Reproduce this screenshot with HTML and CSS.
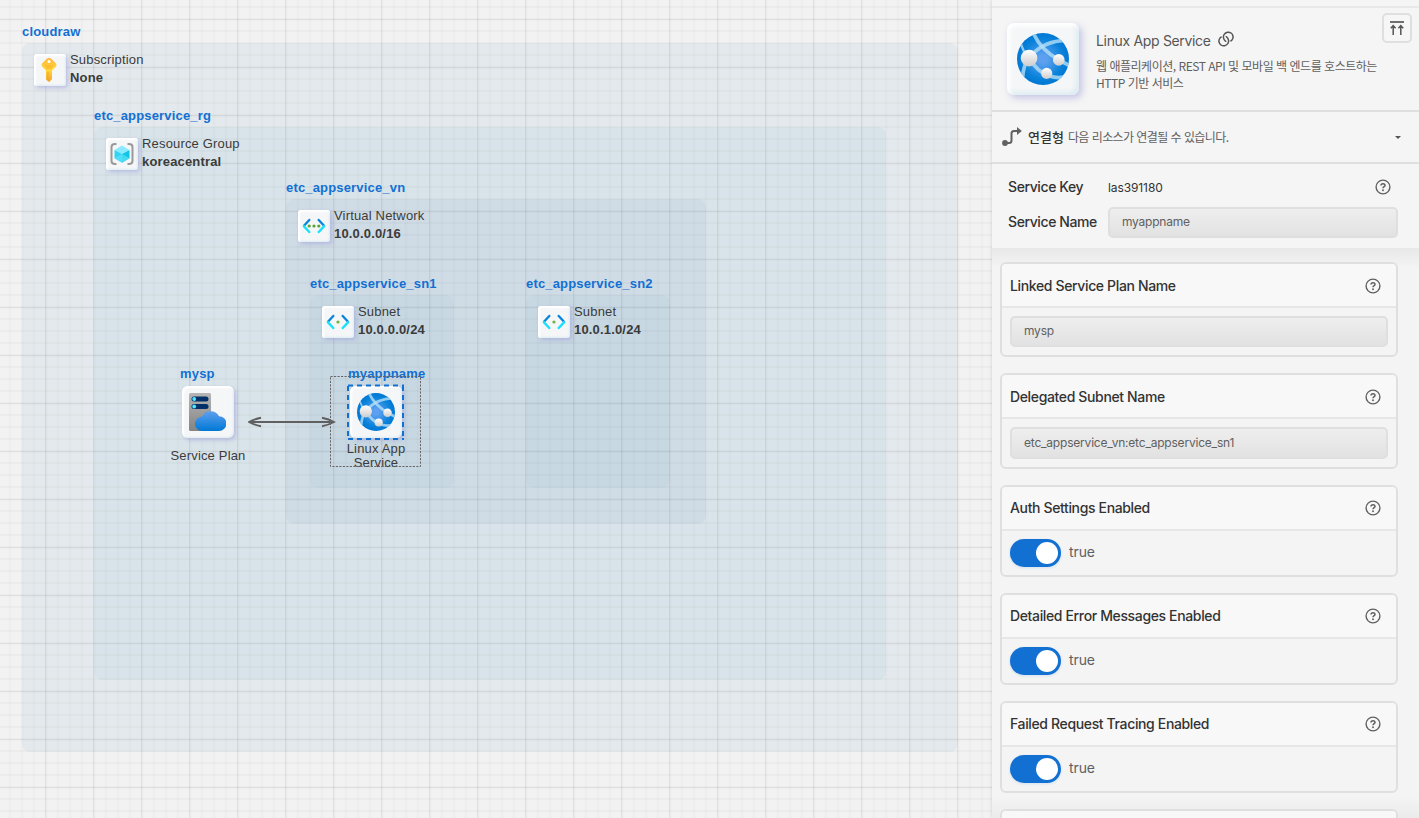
FILE: index.html
```
<!DOCTYPE html>
<html lang="ko">
<head>
<meta charset="utf-8">
<title>cloudraw</title>
<link rel="stylesheet" href="styles.css">
</head>
<body>
<svg class="defs" width="0" height="0">
  <defs>
    <linearGradient id="gCloud" x1="0" y1="0" x2="0" y2="1"><stop offset="0" stop-color="#5ea0ef"/><stop offset="1" stop-color="#0078d4"/></linearGradient>
    <radialGradient id="gGlobe" cx=".5" cy=".5" r=".5"><stop offset=".15" stop-color="#5ea0ef"/><stop offset=".75" stop-color="#0b83db"/><stop offset="1" stop-color="#0078d4"/></radialGradient>
    <linearGradient id="gBall" x1="0" y1="0" x2="0" y2="1"><stop offset="0" stop-color="#fff"/><stop offset="1" stop-color="#ccc"/></linearGradient>
    <linearGradient id="gServer" x1="0" y1="0" x2="0" y2="1"><stop offset="0" stop-color="#b5b5b5"/><stop offset="1" stop-color="#848484"/></linearGradient>
    <linearGradient id="gKey" x1="0" y1="0" x2="0" y2="1"><stop offset="0" stop-color="#ffb63a"/><stop offset=".5" stop-color="#ffd83a"/><stop offset="1" stop-color="#f0a32b"/></linearGradient>
    <symbol id="globe" viewBox="0 0 56 56">
      <clipPath id="globeClip"><circle cx="28" cy="28" r="28"/></clipPath>
      <circle cx="28" cy="28" r="28" fill="url(#gGlobe)"/>
      <g clip-path="url(#globeClip)" fill="none" stroke="#b4dff8" stroke-opacity=".8" stroke-width="4">
        <path d="M13 27Q28 8 54 8"/><path d="M18 1Q26 18 45 29L58 36"/><path d="M13 27Q22 42 34 46T54 46"/><path d="M13 27Q7 34 6 48"/><path d="M4 10Q6 20 13 27" stroke-width="2.500"/>
      </g>
      <g fill="url(#gBall)"><circle cx="13" cy="27" r="9"/><circle cx="45" cy="29" r="6.300"/><circle cx="32" cy="43.500" r="6"/></g>
    </symbol>
    <symbol id="help" viewBox="0 0 16 16">
      <circle cx="8" cy="8" r="6.900" fill="none" stroke="#606060" stroke-width="1.400"/>
      <path d="M6 6.600Q6 4.700 8 4.700T10 6.500C10 7.700 8 7.700 8 9.200" fill="none" stroke="#606060" stroke-width="1.500"/>
      <circle cx="8" cy="11.200" r=".95" fill="#606060"/>
    </symbol>
    <symbol id="angles" viewBox="0 0 24 16">
      <g fill="none" stroke-width="2.300"><path d="M8 1.200L1.700 8M16 1.200L22.300 8" stroke="#0a84d8"/><path d="M1.300 7.600L8 14.800M22.700 7.600L16 14.800" stroke="#19e0fb"/></g>
    </symbol>
  </defs>
</svg>
<div class="app">
  <main class="canvas">
    <div class="area area-sub"></div>
    <div class="area area-rg"></div>
    <div class="area area-vn"></div>
    <div class="area area-sn1"></div>
    <div class="area area-sn2"></div>

    <section class="group at-sub">
      <b class="name">cloudraw</b>
      <div class="head"><span class="tile small"><svg class="key-icon" width="16" height="24" viewBox="0 0 16 24"><path d="M8 0Q9.500 0 10.500 1L15 5.500Q16 7 15 8.500L11 12.500V21L8.500 23.800H7.500L5 21.500V12.500L1 8.500Q0 7 1 5.500L5.500 1Q6.500 0 8 0Z" fill="url(#gKey)"/><circle cx="8" cy="3.600" r="1.500" fill="#fff"/><path d="M4 8H12M5 10H11" stroke="#f7ab2c" stroke-width="1"/><path d="M7 14V22" stroke="#f5a32c" stroke-width="1"/></svg></span><p>Subscription<b>None</b></p></div>
    </section>
    <section class="group at-rg">
      <b class="name">etc_appservice_rg</b>
      <div class="head"><span class="tile small"><svg width="24" height="22" viewBox="0 0 24 22"><path d="M6.500 1H5Q1.500 1 1.500 4V18Q1.500 21 5 21H6.500M17.500 1H19Q22.500 1 22.500 4V18Q22.500 21 19 21H17.500" fill="none" stroke="#999" stroke-width="2"/><path d="M12 2.500L19.500 7L12 11L4.500 7Z" fill="#8aeaff"/><path d="M4.500 7L12 11V19.700L4.500 15.200Z" fill="#32d4f5"/><path d="M19.500 7L12 11V19.700L19.500 15.200Z" fill="#10c6e5"/><path d="M4.500 15.200L12 11L19.500 15.200L12 19.700Z" fill="#62e5f8" opacity=".65"/></svg></span><p>Resource Group<b>koreacentral</b></p></div>
    </section>
    <section class="group at-vn">
      <b class="name">etc_appservice_vn</b>
      <div class="head"><span class="tile small"><svg width="24" height="16"><use href="#angles"/><g fill="#59a533"><circle cx="7.200" cy="8" r="1.600"/><circle cx="12" cy="8" r="1.600"/><circle cx="16.800" cy="8" r="1.600"/></g></svg></span><p>Virtual Network<b>10.0.0.0/16</b></p></div>
    </section>
    <section class="group at-sn1">
      <b class="name">etc_appservice_sn1</b>
      <div class="head"><span class="tile small"><svg width="24" height="16"><use href="#angles"/><circle cx="12" cy="8" r="1.600" fill="#6bb43f"/></svg></span><p>Subnet<b>10.0.0.0/24</b></p></div>
    </section>
    <section class="group at-sn2">
      <b class="name">etc_appservice_sn2</b>
      <div class="head"><span class="tile small"><svg width="24" height="16"><use href="#angles"/><circle cx="12" cy="8" r="1.600" fill="#6bb43f"/></svg></span><p>Subnet<b>10.0.1.0/24</b></p></div>
    </section>

    <section class="node node-plan">
      <b class="name">mysp</b>
      <span class="tile medium"><svg class="plan-icon" width="38" height="38" viewBox="0 0 38 38"><rect x="1" y="0" width="22" height="38" rx="1.500" fill="url(#gServer)"/><rect x="3.500" y="3.500" width="17" height="5" rx="2.500" fill="#003067"/><rect x="3.500" y="11" width="17" height="5" rx="2.500" fill="#003067"/><circle cx="6.200" cy="6" r="1.900" fill="#50e6ff"/><circle cx="6.200" cy="13.500" r="1.900" fill="#50e6ff"/><path d="M14.500 38A7.300 7.300 0 0 1 14 23.400A9.600 9.600 0 0 1 31 23.200A7.400 7.400 0 0 1 31 38Z" fill="url(#gCloud)"/></svg></span>
      <span class="caption">Service Plan</span>
    </section>
    <svg class="arrow" width="88" height="12" viewBox="0 0 88 12" fill="none" stroke="#606060" stroke-width="2"><path d="M1 6H86"/><path d="M13 1.700Q6 3.200 1 6Q6 8.800 13 10.300M74 1.700Q81 3.200 86 6Q81 8.800 74 10.300"/></svg>
    <section class="node node-app">
      <b class="name">myappname</b>
      <span class="tile medium"><svg width="38" height="38"><use href="#globe"/></svg></span>
      <span class="caption">Linux App<br>Service</span>
    </section>
    <svg class="marquee" width="92" height="92"><rect x=".5" y=".5" width="90" height="90" fill="none" stroke="#666" stroke-dasharray="2.200 1.300"/><path d="M17 9.500H74M17 63H74M18 9V64M73 9V64" fill="none" stroke="#1270d3" stroke-width="2" stroke-dasharray="5 4" stroke-dashoffset="-1"/></svg>
  </main>

  <aside class="panel">
    <header class="intro">
      <span class="tile large"><svg width="52" height="52"><use href="#globe"/></svg></span>
      <div class="about">
        <h1>Linux App Service <svg width="16" height="16" viewBox="0 0 16 16" fill="none" stroke="#555" stroke-width="1.500" stroke-linecap="round"><path d="M7.700 10.300C5.200 8.600 4.800 5.300 6.200 3.400C7.900 1 10.900.5 13 2C15.200 3.500 15.700 6.500 14.200 8.600C13.800 9.200 13.400 9.500 12.900 9.900"/><path d="M8.300 5.700C10.800 7.400 11.200 10.700 9.800 12.600C8.100 15 5.100 15.500 3 14C.8 12.500.3 9.500 1.800 7.400C2.200 6.800 2.600 6.500 3.100 6.100"/></svg></h1>
        <p>웹 애플리케이션, REST API 및 모바일 백 엔드를 호스트하는<br>HTTP 기반 서비스</p>
      </div>
      <button class="top-button"><svg width="14" height="14" viewBox="0 0 14 14"><path d="M0 1H14" stroke="#606060" stroke-width="1.800"/><path d="M3.200 14V5M10.800 14V5M.8 7.300L3.200 4.600L5.600 7.300M8.400 7.300L10.800 4.600L13.200 7.300" fill="none" stroke="#555" stroke-width="1.500"/></svg></button>
    </header>
    <div class="links">
      <svg width="20" height="20" viewBox="0 0 20 20"><circle cx="3" cy="16" r="2.900" fill="#606060"/><path d="M3 16H7Q9.500 16 9.500 13.500V6.500Q9.500 4 12 4H15.500" fill="none" stroke="#606060" stroke-width="2"/><path d="M15 0L19.800 4L15 8Z" fill="#606060"/></svg>
      <b>연결형</b><span>다음 리소스가 연결될 수 있습니다.</span><i class="caret"></i>
    </div>
    <div class="service">
      <div class="row"><label>Service Key</label><span class="key">las391180</span><svg width="16" height="16"><use href="#help"/></svg></div>
      <div class="row named"><label>Service Name</label><div class="field">myappname</div></div>
    </div>
    <div class="list">
      <article class="card"><h2>Linked Service Plan Name<svg width="16" height="16"><use href="#help"/></svg></h2><div class="body"><div class="field">mysp</div></div></article>
      <article class="card"><h2>Delegated Subnet Name<svg width="16" height="16"><use href="#help"/></svg></h2><div class="body"><div class="field tall">etc_appservice_vn:etc_appservice_sn1</div></div></article>
      <article class="card"><h2>Auth Settings Enabled<svg width="16" height="16"><use href="#help"/></svg></h2><div class="body"><span class="toggle"></span><span class="value">true</span></div></article>
      <article class="card"><h2>Detailed Error Messages Enabled<svg width="16" height="16"><use href="#help"/></svg></h2><div class="body"><span class="toggle"></span><span class="value">true</span></div></article>
      <article class="card"><h2>Failed Request Tracing Enabled<svg width="16" height="16"><use href="#help"/></svg></h2><div class="body"><span class="toggle"></span><span class="value">true</span></div></article>
      <article class="card"><h2></h2></article>
    </div>
  </aside>
</div>
</body>
</html>
```

FILE: styles.css
```
* { box-sizing: border-box; }
body { margin: 0; overflow: hidden; font-family: Inter, "Noto Sans CJK KR", sans-serif; color: #333; }
svg { display: block; flex: none; }
.defs { position: absolute; }
.app { display: flex; width: 1419px; height: 818px; overflow: hidden; }

.canvas {
  position: relative; width: 992px; overflow: hidden; background-color: #f2f2f2;
  font: 13px/18px "Liberation Sans", Arial, sans-serif; letter-spacing: .17px; color: #3b3b3b;
}
.canvas::after {
  content: ""; position: absolute; inset: 0; z-index: 1;
  background-image:
    linear-gradient(90deg, rgba(0,0,0,.055) 1px, rgba(0,0,0,.012) 1px 2px, transparent 2px),
    linear-gradient(rgba(0,0,0,.05) 1px, rgba(0,0,0,.015) 1px 2px, transparent 2px),
    linear-gradient(90deg, rgba(0,0,0,.024) 1px, rgba(0,0,0,.009) 1px 3px, transparent 3px),
    linear-gradient(rgba(0,0,0,.022) 2px, transparent 2px);
  background-size: 48px 48px, 48px 48px, 12px 12px, 12px 12px;
  background-position: 45px 0, 0 19px, 9px 0, 0 6px;
}
.area { position: absolute; border-radius: 8px; }
.area-sub { left: 22px; top: 43px; width: 936px; height: 709px; background: #e4e9ed; }
.area-rg { left: 94px; top: 127px; width: 792px; height: 553px; background: #d9e4ea; }
.area-vn { left: 286px; top: 199px; width: 420px; height: 325px; background: #d0dce5; }
.area-sn1, .area-sn2 { top: 295px; width: 144px; height: 193px; background: #c8d8e2; }
.area-sn1 { left: 310px; }
.area-sn2 { left: 526px; }
.group { position: absolute; z-index: 2; white-space: nowrap; }
.at-sub { left: 22px; top: 23px; }
.at-rg { left: 94px; top: 107px; }
.at-vn { left: 286px; top: 179px; }
.at-sn1 { left: 310px; top: 275px; }
.at-sn2 { left: 526px; top: 275px; }
.name { display: block; color: #1270d3; }
.head { display: flex; gap: 4px; padding: 10px 0 0 12px; }
.head p { margin: 0; }
.head b { display: block; }
.tile {
  display: flex; align-items: center; justify-content: center; flex: none; background: #f5f6f7;
  box-shadow: 2px 2px 4px rgba(150,150,215,.5), inset 2px 2px 2px #fff, inset -1px -1px 2px #dcecf2;
}
.small { width: 32px; height: 32px; margin-top: 3px; border-radius: 3px; }
.key-icon { margin: -1px 2px 0 0; }
.medium { width: 52px; height: 52px; border-radius: 6px; }
.plan-icon { margin-right: 2px; }
.large {
  width: 72px; height: 72px; border-radius: 7px;
  box-shadow: 3px 3px 7px rgba(150,150,215,.5), inset 3px 3px 4px #fff, inset -3px -3px 5px #dcecf2;
}
.node { position: absolute; z-index: 2; top: 365px; display: flex; flex-direction: column; align-items: center; }
.node .name { height: 21px; align-self: flex-start; }
.node-plan { left: 168px; width: 80px; }
.node-plan .name { margin-left: 12px; }
.node-plan .caption { margin-top: 9px; }
.node-app { left: 330px; width: 92px; }
.node-app .name { margin-left: 18px; }
.node-app .caption { margin-top: 4px; line-height: 14px; text-align: center; }
.arrow { position: absolute; z-index: 2; left: 248px; top: 416px; }
.marquee { position: absolute; z-index: 3; left: 330px; top: 376px; }

.panel { position: relative; z-index: 4; width: 427px; flex: none; display: flex; flex-direction: column; padding-top: 6px; background: #f5f5f5; box-shadow: -1px 0 3px rgba(0,0,0,.09); }
.intro { display: flex; height: 106px; border-top: 2px solid #e9e9e9; border-bottom: 2px solid #dfdfdf; padding: 15px 7px 0 15px; color: #555; }
.about { flex: 1; min-width: 0; padding: 8px 0 0 17px; white-space: nowrap; }
h1 { display: flex; align-items: center; gap: 7px; margin: 0; font-size: 14px; line-height: 20px; font-weight: 400; letter-spacing: -.33px; }
h1 svg { margin-top: -4px; }
.about p { margin: 6px 0 0; font: 12px/17px "Noto Sans CJK KR", sans-serif; letter-spacing: -.48px; color: #606060; }
.top-button { flex: none; display: flex; justify-content: center; align-items: center; width: 30px; height: 30px; margin: -10px 0 0; padding: 0; border: 2px solid #dfdfdf; border-radius: 5px; background: #f6f6f6; }
.links { display: flex; align-items: center; height: 52px; padding: 0 18px 0 10px; border-bottom: 2px solid #dfdfdf; font: 12px/18px "Noto Sans CJK KR", sans-serif; color: #606060; }
.links b { margin: 0 4px 0 6px; font-size: 13px; font-weight: 500; color: #333; }
.links span { letter-spacing: -.56px; }
.caret { margin-left: auto; border: 3px solid transparent; border-top-color: #555; border-bottom: 0; }
.service { height: 84px; padding: 8px 21px 0 16px; font-size: 14px; }
.row { display: flex; align-items: center; height: 30px; }
.row label { width: 100px; margin-top: -2px; font-weight: 500; letter-spacing: -.4px; white-space: nowrap; }
.row svg { margin: 0 7px 0 auto; }
.key { font-size: 12px; letter-spacing: -.1px; }
.named { height: 31px; margin-top: 5px; }
.named label { margin-top: -3px; }
.field { flex: 1; height: 31px; padding-left: 12px; border: 2px solid #dfdfdf; border-radius: 5px; background: linear-gradient(#eee, #e2e2e2); font-size: 12px; line-height: 26px; letter-spacing: -.22px; color: #606060; }
.tall { height: 32px; line-height: 28px; letter-spacing: -.2px; }
.list { flex: 1; overflow: hidden; padding: 14px 21px 0 8px; background: linear-gradient(#e8e8e8, #f4f4f4 20px, #f4f4f4 548px, #ebebeb); }
.card { margin-bottom: 16px; border: 2px solid #dfdfdf; border-radius: 6px; background: #f4f4f4; }
h2 { display: flex; align-items: center; justify-content: space-between; height: 44px; margin: 0; padding: 1px 15px 0 8px; border-bottom: 2px solid #e7e7e7; border-radius: 4px 4px 0 0; background: #f8f8f8; font-size: 14px; line-height: 17px; font-weight: 500; letter-spacing: -.36px; }
h2 svg { margin-top: 1px; }
.card:nth-child(n+3) h2 { padding-top: 0; padding-bottom: 1px; }
.body { display: flex; align-items: center; gap: 8px; padding: 8px; font-size: 14px; color: #606060; }
.value { margin-top: -3px; line-height: 17px; letter-spacing: -.1px; }
.toggle { width: 51px; height: 28px; padding: 3px; border-radius: 14px; background: #1270d3; box-shadow: 0 1px 3px rgba(18,112,211,.15); }
.toggle::after { content: ""; display: block; width: 22px; height: 22px; margin-left: auto; border-radius: 50%; background: #fff; }
```
